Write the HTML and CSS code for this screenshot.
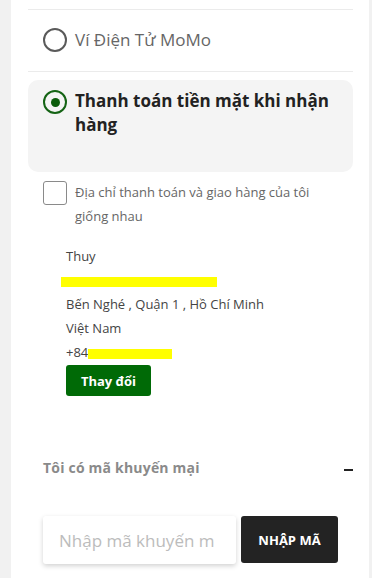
FILE: index.html
```html
<!DOCTYPE html>
<html lang="vi">
<head>
<meta charset="utf-8">
<link rel="stylesheet" href="styles.css">
</head>
<body>
<div class="page">
  <div class="card">
    <div class="option">
      <span class="radio"></span>
      <span class="option-label">Ví Điện Tử MoMo</span>
    </div>
    <div class="option-selected">
      <span class="radio radio-on"><span class="dot"></span></span>
      <span class="option-label-bold">Thanh toán tiền mặt khi nhận hàng</span>
    </div>
    <div class="check-row">
      <span class="checkbox"></span>
      <span class="check-label">Địa chỉ thanh toán và giao hàng của tôi giống nhau</span>
    </div>
    <div class="address">
      <div class="addr-line">Thuy</div>
      <div class="addr-line"><span class="redact redact-street"></span></div>
      <div class="addr-line">Bến Nghé , Quận 1 , Hồ Chí Minh</div>
      <div class="addr-line">Việt Nam</div>
      <div class="addr-line">+84<span class="redact redact-phone"></span></div>
      <button class="btn-change">Thay đổi</button>
    </div>
    <div class="promo-head">
      <span class="promo-title">Tôi có mã khuyến mại</span>
      <span class="promo-toggle"></span>
    </div>
    <div class="promo-form">
      <div class="promo-input">Nhập mã khuyến m</div>
      <button class="btn-apply">NHẬP MÃ</button>
    </div>
  </div>
</div>
</body>
</html>
```
FILE: styles.css
```css
* { box-sizing: border-box; }
html, body { margin: 0; padding: 0; }
body {
  background: #f1f1f1;
  font-family: "Open Sans", "DejaVu Sans", sans-serif;
  width: 372px;
  height: 578px;
  overflow: hidden;
}
.page {
  padding: 0 3px 0 11px;
  height: 578px;
}
.card {
  background: #fff;
  height: 578px;
  padding: 9px 16px 0 17px;
}
.option {
  display: flex;
  align-items: center;
  gap: 8px;
  height: 63px;
  padding: 0 0 2px 15px;
  border-top: 1px solid #ebebeb;
  border-bottom: 1px solid #ebebeb;
}
.radio {
  width: 24px;
  height: 24px;
  border: 2px solid #5a5a5a;
  border-radius: 50%;
  flex: none;
  display: flex;
  align-items: center;
  justify-content: center;
}
.radio-on {
  border-color: #146314;
}
.dot {
  width: 9px;
  height: 9px;
  border-radius: 50%;
  background: #0b5c0b;
}
.option-label {
  font-size: 17px;
  color: #666;
  margin-bottom: 1px;
}
.option-selected {
  margin-top: 8px;
  background: #f4f4f4;
  border-radius: 10px;
  height: 92px;
  padding: 9px 15px 0 15px;
  display: flex;
  align-items: flex-start;
  gap: 8px;
}
.option-selected .radio { margin-top: 1px; }
.option-label-bold {
  font-size: 17px;
  font-weight: 700;
  color: #222;
  line-height: 24px;
}
.check-row {
  margin-top: 8px;
  padding-left: 15px;
  display: flex;
  align-items: flex-start;
  gap: 8px;
}
.checkbox {
  flex: none;
  width: 24px;
  height: 24px;
  border: 1px solid #8a8a8a;
  border-radius: 3px;
  margin-top: 1px;
}
.check-label {
  font-size: 13px;
  line-height: 24px;
  color: #666;
  padding-right: 30px;
}
.address {
  margin-top: 16px;
  padding-left: 38px;
}
.addr-line {
  font-size: 13px;
  line-height: 24px;
  color: #444;
  height: 24px;
}
.redact {
  display: inline-block;
  background: #ffff00;
  height: 10px;
  vertical-align: middle;
}
.redact-street {
  width: 156px;
  margin-left: -5px;
}
.redact-phone {
  width: 84px;
}
.btn-change {
  margin-top: 1px;
  display: block;
  width: 85px;
  height: 31px;
  border: 0;
  border-radius: 3px;
  background: #006a06;
  color: #fff;
  font-family: inherit;
  font-weight: 700;
  font-size: 13px;
  padding: 0;
}
.promo-head {
  margin-top: 59px;
  padding-left: 15px;
  display: flex;
  align-items: center;
  justify-content: space-between;
  height: 24px;
}
.promo-title {
  font-size: 14px;
  font-weight: 700;
  color: #8a8a8a;
  letter-spacing: 0.2px;
}
.promo-toggle {
  width: 9px;
  height: 2px;
  background: #222;
  margin-top: 6px;
}
.promo-form {
  margin-top: 37px;
  padding-left: 15px;
  display: flex;
  gap: 5px;
}
.promo-input {
  width: 193px;
  height: 48px;
  background: #fff;
  border-radius: 3px;
  box-shadow: 0 2px 5px rgba(0,0,0,0.18);
  font-size: 17px;
  color: #bcbcbc;
  padding-left: 16px;
  display: flex;
  align-items: center;
  white-space: nowrap;
  overflow: hidden;
}
.btn-apply {
  width: 97px;
  height: 47px;
  border: 0;
  border-radius: 3px;
  background: #232323;
  color: #fff;
  font-family: inherit;
  font-weight: 700;
  font-size: 13px;
  padding: 0;
}
```
